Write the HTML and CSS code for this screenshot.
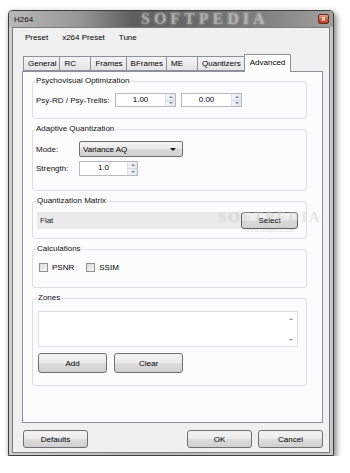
FILE: index.html
```html
<!DOCTYPE html>
<html lang="en">
  <head>
    <meta charset="UTF-8" />
    <title>H264</title>
    <link rel="stylesheet" href="styles.css">
  </head>
  <body>
    <div class="window">
      <div class="titlebar">
        <span class="title">H264</span>
        <span class="watermark">SOFTPEDIA</span>
        <span class="close-btn">x</span>
      </div>
      <div class="client">
        <div class="menubar">
          <span>Preset</span>
          <span>x264 Preset</span>
          <span>Tune</span>
        </div>

        <div class="tabs">
          <span class="tab">General</span>
          <span class="tab">RC</span>
          <span class="tab">Frames</span>
          <span class="tab">BFrames</span>
          <span class="tab">ME</span>
          <span class="tab">Quantizers</span>
          <span class="tab active">Advanced</span>
        </div>

        <div class="pane">
          <fieldset class="group psy">
            <legend>Psychovisual Optimization</legend>
            <div class="row">
              <span class="label wide">Psy-RD / Psy-Trellis:</span>
              <div class="spin">
                <span class="value">1.00</span>
                <span class="arrows"><i class="up"></i><i class="down"></i></span>
              </div>
              <div class="spin">
                <span class="value">0.00</span>
                <span class="arrows"><i class="up"></i><i class="down"></i></span>
              </div>
            </div>
          </fieldset>

          <fieldset class="group aq">
            <legend>Adaptive Quantization</legend>
            <div class="row">
              <span class="label">Mode:</span>
              <div class="combo">
                <span>Variance AQ</span>
                <i class="combo-arrow"></i>
              </div>
            </div>
            <div class="row">
              <span class="label">Strength:</span>
              <div class="spin short">
                <span class="value">1.0</span>
                <span class="arrows"><i class="up"></i><i class="down"></i></span>
              </div>
            </div>
          </fieldset>

          <fieldset class="group qm">
            <legend>Quantization Matrix</legend>
            <div class="row">
              <span class="lineedit">Flat</span>
              <button class="btn select-btn">Select</button>
            </div>
            <div class="stamp">
              <span class="stamp-big">SOFTPEDIA</span>
              <span class="stamp-small">www.softpedia.com</span>
            </div>
          </fieldset>

          <fieldset class="group calc">
            <legend>Calculations</legend>
            <div class="row checks">
              <label class="check"><i class="box"></i>PSNR</label>
              <label class="check"><i class="box"></i>SSIM</label>
            </div>
          </fieldset>

          <fieldset class="group zones">
            <legend>Zones</legend>
            <div class="listbox">
              <div class="list-scroll"><i class="up"></i><i class="down"></i></div>
            </div>
            <div class="row buttons">
              <button class="btn wide-btn">Add</button>
              <button class="btn wide-btn">Clear</button>
            </div>
          </fieldset>
        </div>

        <div class="footer">
          <button class="btn foot-btn">Defaults</button>
          <span class="spacer"></span>
          <button class="btn foot-btn">OK</button>
          <button class="btn foot-btn">Cancel</button>
        </div>
      </div>
    </div>
  </body>
</html>
```

FILE: styles.css
```css
* {
  box-sizing: border-box;
}

body {
  margin: 0;
  background: #ffffff;
  font-family: "Liberation Sans", Arial, sans-serif;
  font-size: 8px;
  color: #111111;
}

.window {
  margin: 10px 0 0 8px;
  width: 326px;
  height: 446px;
  border: 1px solid #3f3f3f;
  border-radius: 4px 4px 0 0;
  background: linear-gradient(to right, #cdcdcd, #b8b8b8 40%, #c6c6c6);
  box-shadow: 2px 3px 6px rgba(0, 0, 0, 0.55);
  display: flex;
  flex-direction: column;
}

.titlebar {
  position: relative;
  height: 16px;
  display: flex;
  align-items: center;
  padding-left: 5px;
  background: linear-gradient(
    to right,
    #b8b8b8 0%,
    #969696 22%,
    #5e5e5e 38%,
    #6c6c6c 62%,
    #808080 78%,
    #a0a0a0 100%
  );
  border-radius: 3px 3px 0 0;
}

.title {
  font-size: 8px;
  color: #141414;
}

.watermark {
  position: absolute;
  left: 132px;
  top: -1px;
  font-family: "Liberation Serif", serif;
  font-weight: bold;
  font-size: 16px;
  letter-spacing: 4px;
  color: rgba(200, 200, 200, 0.5);
  text-shadow: 0 0 3px rgba(255, 255, 255, 0.45);
}

.close-btn {
  position: absolute;
  right: 4px;
  top: 3px;
  width: 11px;
  height: 10px;
  border: 1px solid #6a2a1c;
  border-radius: 2px;
  background: linear-gradient(#e6a28c, #c9553a 55%, #b3402a);
  color: #ffffff;
  font-size: 7px;
  font-weight: bold;
  line-height: 8px;
  text-align: center;
}

.client {
  flex: 1;
  margin: 0 3px 2px 3px;
  border: 1px solid #7c7c7c;
  background: #f0f0f0;
  padding: 0 6px 0 9px;
  display: flex;
  flex-direction: column;
}

.menubar {
  height: 19px;
  display: flex;
  align-items: center;
  gap: 14px;
  padding-left: 3px;
  color: #000000;
}

.tabs {
  display: flex;
  align-items: flex-end;
  height: 24px;
  padding-left: 1px;
  position: relative;
  z-index: 1;
}

.tab {
  min-width: 31px;
  height: 15px;
  padding: 0 3px 0 4px;
  line-height: 14px;
  border: 1px solid #8e9199;
  border-left: none;
  background: linear-gradient(#f4f4f4, #e4e4e4);
  color: #000000;
}

.tab:first-child {
  border-left: 1px solid #8e9199;
}

.tab.active {
  height: 18px;
  margin-bottom: -1px;
  margin-left: -1px;
  padding: 0 5px;
  border: 1px solid #8e9199;
  border-bottom: none;
  background: #ffffff;
  line-height: 15px;
}

.pane {
  height: 352px;
  width: 301px;
  border: 1px solid #8e9199;
  background: #fcfcfc;
  padding: 4px 15px 0 9px;
  display: flex;
  flex-direction: column;
  gap: 5px;
}

.group {
  position: relative;
  margin: 0;
  min-width: 0;
  border: 1px solid #d8dfe6;
  border-radius: 3px;
  padding: 7px 7px 11px 3px;
}

.group legend {
  padding: 0 1px;
  margin-left: -1px;
  line-height: 10px;
  color: #111111;
}

.row {
  display: flex;
  align-items: center;
}

.label {
  width: 43px;
}

.label.wide {
  width: 79px;
}

.spin {
  display: flex;
  width: 61px;
  height: 14px;
  border: 1px solid #b5b9c2;
  background: #ffffff;
  margin-right: 5px;
}

.spin.short {
  width: 59px;
  height: 15px;
}

.spin .value {
  flex: 1;
  text-align: center;
  line-height: 12px;
  color: #000000;
}

.arrows {
  width: 10px;
  display: flex;
  flex-direction: column;
  border-left: 1px solid #dfe3e8;
  background: linear-gradient(to right, #f3f4f6, #e4e7ec);
}

.arrows i {
  flex: 1;
  display: flex;
  align-items: center;
  justify-content: center;
}

.arrows .up {
  border-bottom: 1px solid #d4d8de;
}

.arrows i::after,
.list-scroll i::after {
  content: "";
  border-left: 2px solid transparent;
  border-right: 2px solid transparent;
}

.arrows .up::after {
  border-bottom: 2px solid #6a88b2;
}

.arrows .down::after {
  border-top: 2px solid #6a88b2;
}

.aq .row + .row {
  margin-top: 4px;
}

.aq {
  padding-bottom: 14px;
}

.psy {
  padding-bottom: 11px;
}

.combo {
  width: 104px;
  height: 16px;
  display: flex;
  align-items: center;
  justify-content: space-between;
  padding: 0 6px 0 3px;
  border: 1px solid #707070;
  border-radius: 2px;
  background: linear-gradient(#f4f4f4, #e8e8e8 50%, #dadada 51%, #d0d0d0);
  color: #000000;
}

.combo-arrow {
  border-left: 3px solid transparent;
  border-right: 3px solid transparent;
  border-top: 3px solid #111111;
}

.qm {
  padding: 6px 8px 9px 4px;
}

.lineedit {
  flex: 1;
  height: 17px;
  line-height: 17px;
  padding-left: 3px;
  background: linear-gradient(#e9e9e9, #ececec);
  color: #222222;
}

.btn {
  font-family: "Liberation Sans", Arial, sans-serif;
  font-size: 8px;
  color: #000000;
  border: 1px solid #707070;
  border-radius: 3px;
  background: linear-gradient(#f3f3f3, #ebebeb 48%, #dddddd 52%, #cfcfcf);
  padding: 0;
  margin: 0;
}

.select-btn {
  width: 57px;
  height: 17px;
  margin-left: -2px;
  border-color: #5f5f5f;
}

.stamp {
  position: absolute;
  left: 185px;
  top: 3px;
  display: flex;
  flex-direction: column;
  align-items: center;
  pointer-events: none;
}

.stamp-big {
  font-family: "Liberation Serif", serif;
  font-weight: bold;
  font-size: 15px;
  letter-spacing: 2px;
  color: rgba(255, 255, 255, 0.25);
  text-shadow: 0 0 1px rgba(140, 140, 140, 0.3);
}

.stamp-small {
  font-family: "Liberation Serif", serif;
  font-size: 6px;
  margin-top: 1px;
  color: rgba(160, 160, 160, 0.4);
}

.calc {
  padding: 7px 7px 14px 4px;
}

.checks {
  gap: 12px;
  height: 12px;
  padding-left: 2px;
}

.check {
  display: flex;
  align-items: center;
  gap: 4px;
  color: #000000;
}

.box {
  width: 9px;
  height: 9px;
  border: 1px solid #8e8f8f;
  background: linear-gradient(135deg, #dcdcdc, #f6f6f6);
}

.zones {
  padding: 8px 8px 12px 5px;
}

.listbox {
  position: relative;
  height: 36px;
  border: 1px solid #dcdfe4;
  background: #ffffff;
}

.list-scroll {
  position: absolute;
  right: 0;
  top: 0;
  bottom: 0;
  width: 13px;
  display: flex;
  flex-direction: column;
  justify-content: space-between;
  align-items: center;
  padding: 6px 0 5px;
}

.list-scroll i {
  display: flex;
}

.list-scroll .up::after {
  border-bottom: 2px solid #9a9a9a;
}

.list-scroll .down::after {
  border-top: 2px solid #9a9a9a;
}

.buttons {
  margin-top: 6px;
  gap: 7px;
}

.wide-btn {
  width: 69px;
  height: 20px;
}

.footer {
  display: flex;
  margin-top: 7px;
  gap: 6px;
  padding-left: 1px;
}

.spacer {
  flex: 1;
}

.foot-btn {
  width: 65px;
  height: 18px;
}
```
